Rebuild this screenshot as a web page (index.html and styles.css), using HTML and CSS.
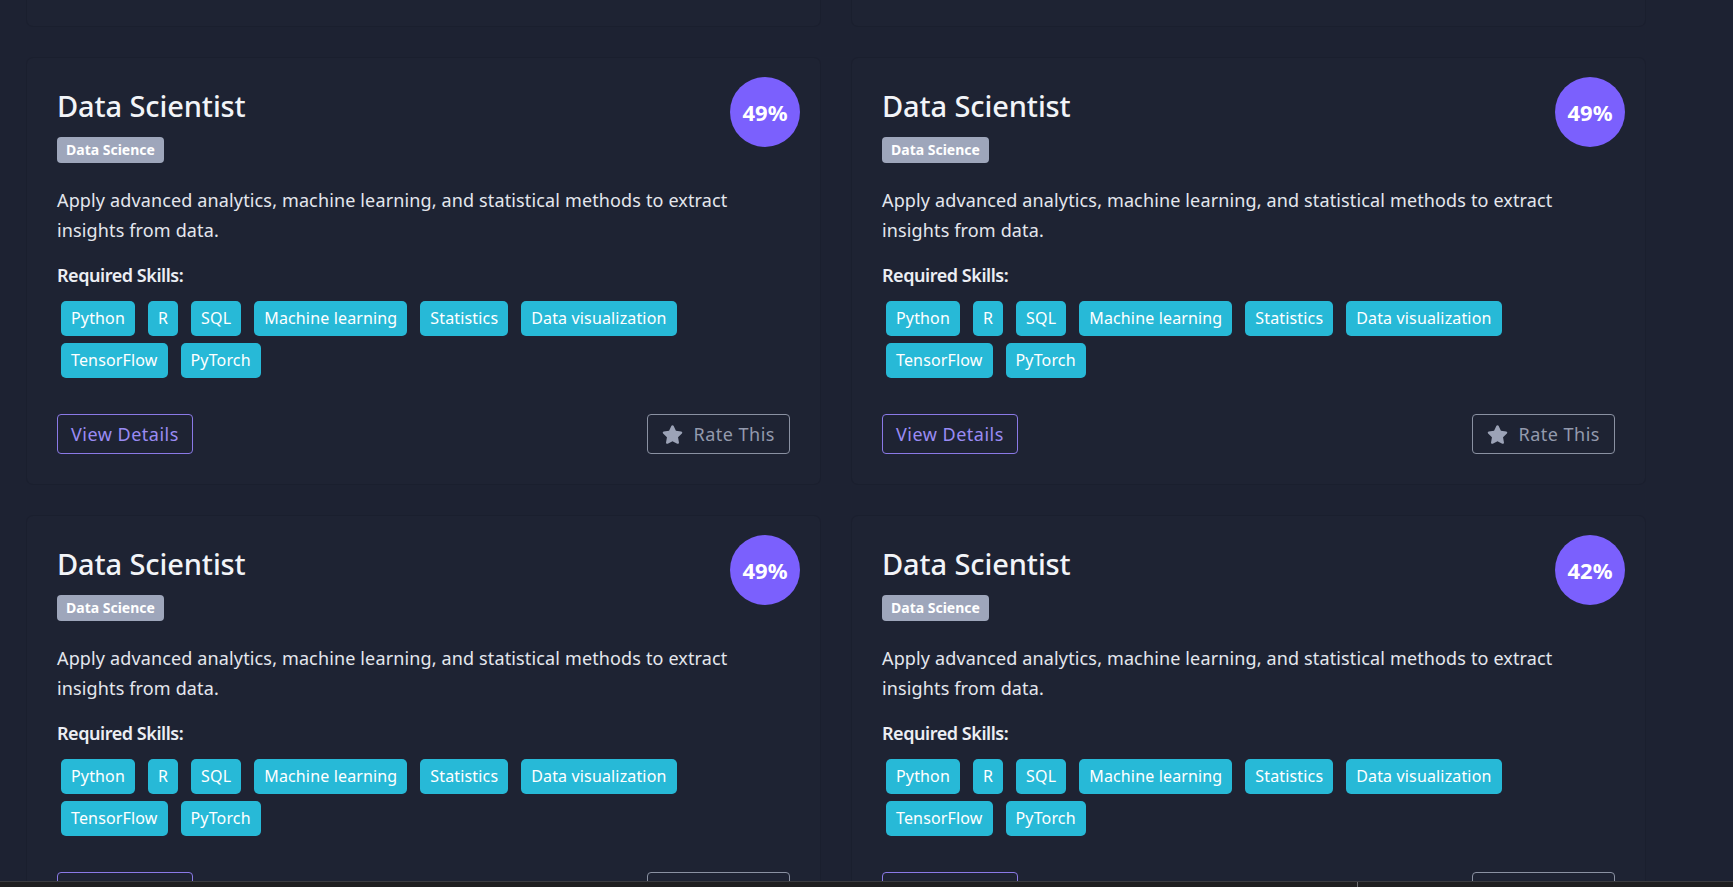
FILE: index.html
```html
<!DOCTYPE html>
<html lang="en">
<head>
<meta charset="utf-8">
<title>Career Matches</title>
<link rel="stylesheet" href="styles.css">
</head>
<body>
<main class="grid">
  <div class="card card--stub"></div>
  <div class="card card--stub"></div>

  <article class="card">
    <div class="match">49%</div>
    <h3 class="title">Data Scientist</h3>
    <span class="category">Data Science</span>
    <p class="desc">Apply advanced analytics, machine learning, and statistical methods to extract insights from data.</p>
    <h4 class="req">Required Skills:</h4>
    <div class="skills">
      <span class="skill">Python</span><span class="skill">R</span><span class="skill">SQL</span><span class="skill">Machine learning</span><span class="skill">Statistics</span><span class="skill">Data visualization</span><span class="skill">TensorFlow</span><span class="skill">PyTorch</span>
    </div>
    <div class="actions">
      <button class="btn btn--details">View Details</button>
      <button class="btn btn--rate"><svg class="star" viewBox="0 0 576 512"><path d="M259.3 17.8L194 150.2 47.9 171.5c-26.2 3.8-36.7 36.1-17.7 54.6l105.7 103-25 145.5c-4.5 26.3 23.2 46 46.4 33.7L288 439.6l130.7 68.7c23.2 12.2 50.9-7.4 46.4-33.7l-25-145.5 105.7-103c19-18.5 8.5-50.8-17.7-54.6L382 150.2 316.7 17.8c-11.7-23.6-45.6-23.9-57.4 0z"/></svg>Rate This</button>
    </div>
  </article>

  <article class="card">
    <div class="match">49%</div>
    <h3 class="title">Data Scientist</h3>
    <span class="category">Data Science</span>
    <p class="desc">Apply advanced analytics, machine learning, and statistical methods to extract insights from data.</p>
    <h4 class="req">Required Skills:</h4>
    <div class="skills">
      <span class="skill">Python</span><span class="skill">R</span><span class="skill">SQL</span><span class="skill">Machine learning</span><span class="skill">Statistics</span><span class="skill">Data visualization</span><span class="skill">TensorFlow</span><span class="skill">PyTorch</span>
    </div>
    <div class="actions">
      <button class="btn btn--details">View Details</button>
      <button class="btn btn--rate"><svg class="star" viewBox="0 0 576 512"><path d="M259.3 17.8L194 150.2 47.9 171.5c-26.2 3.8-36.7 36.1-17.7 54.6l105.7 103-25 145.5c-4.5 26.3 23.2 46 46.4 33.7L288 439.6l130.7 68.7c23.2 12.2 50.9-7.4 46.4-33.7l-25-145.5 105.7-103c19-18.5 8.5-50.8-17.7-54.6L382 150.2 316.7 17.8c-11.7-23.6-45.6-23.9-57.4 0z"/></svg>Rate This</button>
    </div>
  </article>

  <article class="card">
    <div class="match">49%</div>
    <h3 class="title">Data Scientist</h3>
    <span class="category">Data Science</span>
    <p class="desc">Apply advanced analytics, machine learning, and statistical methods to extract insights from data.</p>
    <h4 class="req">Required Skills:</h4>
    <div class="skills">
      <span class="skill">Python</span><span class="skill">R</span><span class="skill">SQL</span><span class="skill">Machine learning</span><span class="skill">Statistics</span><span class="skill">Data visualization</span><span class="skill">TensorFlow</span><span class="skill">PyTorch</span>
    </div>
    <div class="actions">
      <button class="btn btn--details">View Details</button>
      <button class="btn btn--rate"><svg class="star" viewBox="0 0 576 512"><path d="M259.3 17.8L194 150.2 47.9 171.5c-26.2 3.8-36.7 36.1-17.7 54.6l105.7 103-25 145.5c-4.5 26.3 23.2 46 46.4 33.7L288 439.6l130.7 68.7c23.2 12.2 50.9-7.4 46.4-33.7l-25-145.5 105.7-103c19-18.5 8.5-50.8-17.7-54.6L382 150.2 316.7 17.8c-11.7-23.6-45.6-23.9-57.4 0z"/></svg>Rate This</button>
    </div>
  </article>

  <article class="card">
    <div class="match">42%</div>
    <h3 class="title">Data Scientist</h3>
    <span class="category">Data Science</span>
    <p class="desc">Apply advanced analytics, machine learning, and statistical methods to extract insights from data.</p>
    <h4 class="req">Required Skills:</h4>
    <div class="skills">
      <span class="skill">Python</span><span class="skill">R</span><span class="skill">SQL</span><span class="skill">Machine learning</span><span class="skill">Statistics</span><span class="skill">Data visualization</span><span class="skill">TensorFlow</span><span class="skill">PyTorch</span>
    </div>
    <div class="actions">
      <button class="btn btn--details">View Details</button>
      <button class="btn btn--rate"><svg class="star" viewBox="0 0 576 512"><path d="M259.3 17.8L194 150.2 47.9 171.5c-26.2 3.8-36.7 36.1-17.7 54.6l105.7 103-25 145.5c-4.5 26.3 23.2 46 46.4 33.7L288 439.6l130.7 68.7c23.2 12.2 50.9-7.4 46.4-33.7l-25-145.5 105.7-103c19-18.5 8.5-50.8-17.7-54.6L382 150.2 316.7 17.8c-11.7-23.6-45.6-23.9-57.4 0z"/></svg>Rate This</button>
    </div>
  </article>
</main>
<div class="bottombar"><span class="bottombar__split"></span></div>
</body>
</html>
```
FILE: styles.css
```css
html, body {
  margin: 0;
  padding: 0;
  height: 100%;
  overflow: hidden;
}
body {
  background: #1d2232;
  font-family: "Noto Sans", "Liberation Sans", sans-serif;
  color: #e6e8ee;
}
.grid {
  display: grid;
  grid-template-columns: 793px 793px;
  column-gap: 32px;
  row-gap: 32px;
  padding-left: 27px;
}
.card {
  position: relative;
  background: #1e2333;
  border-radius: 6px;
  box-shadow: 0 0 0 1px rgba(22, 26, 40, 0.35);
  padding: 30px;
  box-sizing: border-box;
  height: 426px;
  display: flex;
  flex-direction: column;
  align-items: flex-start;
}
.card--stub {
  height: 26px;
  padding: 0;
  border-top-left-radius: 0;
  border-top-right-radius: 0;
}
.match {
  position: absolute;
  top: 19px;
  right: 20px;
  width: 70px;
  height: 70px;
  border-radius: 50%;
  background: #7b60fd;
  color: #ffffff;
  font-weight: 700;
  font-size: 22px;
  display: flex;
  align-items: center;
  justify-content: center;
}
.title {
  margin: 0;
  font-size: 29px;
  line-height: 36px;
  font-weight: 500;
  color: #f2f4f8;
  letter-spacing: -0.1px;
}
.category {
  margin-top: 13px;
  background: #9ea6bb;
  color: #ffffff;
  font-size: 14px;
  font-weight: 700;
  line-height: 18px;
  padding: 4px 9px;
  border-radius: 4px;
}
.desc {
  margin: 22px 0 0;
  font-size: 18px;
  line-height: 30px;
  color: #e4e7ee;
  letter-spacing: 0.14px;
  max-width: 720px;
}
.req {
  margin: 17px 0 0;
  font-size: 18px;
  line-height: 27px;
  font-weight: 600;
  letter-spacing: -0.45px;
  color: #eceef3;
}
.skills {
  margin-top: 12px;
  margin-left: 4px;
  display: flex;
  flex-wrap: wrap;
  column-gap: 13px;
  row-gap: 7px;
  max-width: 640px;
}
.skill {
  background: #27b9d7;
  color: #ffffff;
  font-size: 16px;
  line-height: 25px;
  letter-spacing: 0.15px;
  padding: 5px 10px;
  border-radius: 5px;
}
.actions {
  margin-top: auto;
  align-self: stretch;
  display: flex;
  justify-content: space-between;
  align-items: center;
}
.btn {
  background: transparent;
  font-family: inherit;
  font-size: 18px;
  line-height: 24px;
  letter-spacing: 0.5px;
  padding: 7px 13px;
  border-radius: 4px;
  border: 1px solid;
  display: flex;
  align-items: center;
}
.btn--details {
  border-color: #8a79e6;
  color: #9a8bf3;
}
.btn--rate {
  border-color: #8a91a2;
  color: #939aad;
  padding: 7px 14px;
}
.star {
  width: 21px;
  height: 19px;
  fill: #9ca3b7;
  margin-right: 10px;
}
.bottombar {
  position: fixed;
  left: 0;
  right: 0;
  bottom: 0;
  height: 5px;
  background: #1f1f21;
  border-top: 1px solid #3b3c40;
}
.bottombar__split {
  position: absolute;
  left: 1357px;
  top: 0;
  bottom: 0;
  width: 1px;
  background: #6a6b70;
}
```
